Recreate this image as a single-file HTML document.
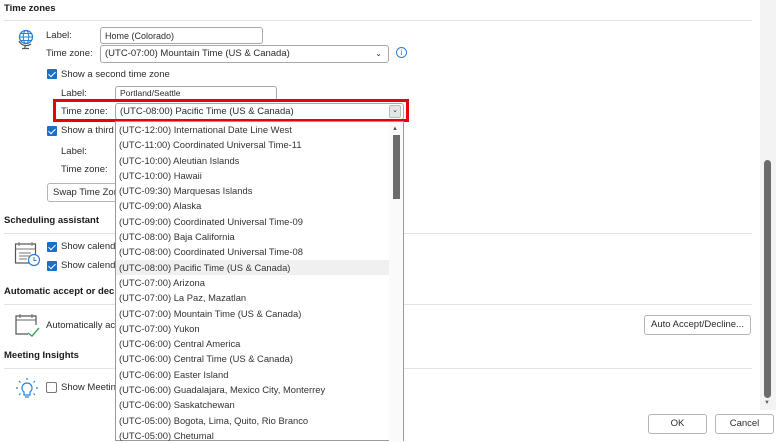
<!DOCTYPE html>
<html><head><meta charset="utf-8"><style>
*{margin:0;padding:0;box-sizing:border-box}
body{width:780px;height:437px;background:#fff;font-family:"Liberation Sans",sans-serif;font-size:9.5px;color:#2b2b2b;position:relative;overflow:hidden}
.a{position:absolute;white-space:nowrap}
.h{font-weight:bold;font-size:9.5px;color:#1a1a1a}
.line{position:absolute;height:1px;background:#e3e3e3;left:4px;width:748px}
.in{position:absolute;border:1px solid #a8a8a8;border-radius:3px;background:#fff;padding-left:4px;line-height:16px;font-size:9px}
.cb{position:absolute;width:10px;height:10px;background:#1a6fc8;border-radius:1px}
.cb:after{content:"";position:absolute;left:3px;top:1px;width:3px;height:6px;border:solid #fff;border-width:0 1.5px 1.5px 0;transform:rotate(45deg)}
.cbe{position:absolute;width:11px;height:11px;border:1px solid #777;border-radius:2px;background:#fff}
.btn{position:absolute;border:1px solid #b5b5b5;border-radius:3px;background:#fff;text-align:center;font-size:9.5px}
.dd{position:absolute;left:115px;top:121px;width:289px;height:320px;background:#fff;border:1px solid #9a9a9a}
.it{height:15.3px;line-height:15.3px;padding-left:3px;font-size:9.4px;color:#333}
.sel{background:#f0f0f0}
</style></head><body>
<div style="position:absolute;left:760px;top:0;width:16px;height:410px;background:#f3f3f3"></div>
<div style="position:absolute;left:764px;top:160px;width:7px;height:238px;background:#6b6b6b;border-radius:4px"></div>
<div class="a" style="left:764px;top:400px;font-size:6px;color:#666">▼</div>

<div class="a h" style="left:4px;top:3px">Time zones</div>
<div class="line" style="top:20px"></div>
<svg class="a" style="left:17px;top:28px" width="18" height="22" viewBox="0 0 18 22"><circle cx="9" cy="9" r="6.5" fill="none" stroke="#2a7fd4" stroke-width="1.3"/><ellipse cx="9" cy="9" rx="2.8" ry="6.5" fill="none" stroke="#2a7fd4" stroke-width="1"/><path d="M2.5 9h13M4 5.5h10M4 12.5h10" stroke="#2a7fd4" stroke-width="1"/><path d="M2 13a8 8 0 0 0 12 3M8 17v3M5 20.5h7" stroke="#555" stroke-width="1.2" fill="none"/></svg>
<div class="a" style="left:46px;top:30px">Label:</div>
<div class="in" style="left:100px;top:27px;width:163px;height:17px">Home (Colorado)</div>
<div class="a" style="left:46px;top:48px">Time zone:</div>
<div class="in" style="left:100px;top:45px;width:289px;height:18px;font-size:9.5px">(UTC-07:00) Mountain Time (US &amp; Canada)<span style="position:absolute;right:6px;top:0;font-size:8px">⌄</span></div>
<div class="a" style="left:396px;top:47px;width:11px;height:11px;border:1.3px solid #2a7fd4;border-radius:50%;color:#2a7fd4;font-size:8px;text-align:center;line-height:9px">i</div>
<div class="cb" style="left:47px;top:69px"></div>
<div class="a" style="left:61px;top:69px">Show a second time zone</div>
<div class="a" style="left:61px;top:88px">Label:</div>
<div class="in" style="left:115px;top:86px;width:162px;height:15px;line-height:13px;font-size:8.5px">Portland/Seattle</div>
<div class="a" style="left:61px;top:106px">Time zone:</div>
<div class="in" style="left:115px;top:103px;width:289px;height:17px;line-height:15px;font-size:9.5px">(UTC-08:00) Pacific Time (US &amp; Canada)<span style="position:absolute;right:2px;top:1px;width:12px;height:13px;background:#e5e5e5;border:1px solid #bbb;border-radius:2px;font-size:7px;line-height:10px;text-align:center">⌄</span></div>
<div class="a" style="left:53px;top:99px;width:356px;height:23px;border:3px solid #e8000b"></div>
<div class="cb" style="left:47px;top:126px"></div>
<div class="a" style="left:61px;top:125px">Show a third time zone</div>
<div class="a" style="left:61px;top:146px">Label:</div>
<div class="a" style="left:61px;top:164px">Time zone:</div>
<div class="btn" style="left:47px;top:183px;width:100px;height:19px;line-height:17px;text-align:left;padding-left:5px">Swap Time Zones</div>

<div class="a h" style="left:4px;top:215px">Scheduling assistant</div>
<div class="line" style="top:233px"></div>
<svg class="a" style="left:14px;top:241px" width="28" height="26" viewBox="0 0 28 26"><rect x="1.5" y="3" width="20" height="19" fill="none" stroke="#555" stroke-width="1.2"/><path d="M1.5 8h20M5 1v4M18 1v4M5 12h12M5 15h12M5 18h8" stroke="#777" stroke-width="1"/><circle cx="20" cy="19" r="5.5" fill="#fff" stroke="#2a7fd4" stroke-width="1.2"/><path d="M20 16v3.5h2.5" stroke="#2a7fd4" stroke-width="1" fill="none"/></svg>
<div class="cb" style="left:47px;top:242px"></div>
<div class="a" style="left:61px;top:241px">Show calendar</div>
<div class="cb" style="left:47px;top:261px"></div>
<div class="a" style="left:61px;top:260px">Show calendar</div>

<div class="a h" style="left:4px;top:286px">Automatic accept or decline</div>
<div class="line" style="top:304px"></div>
<svg class="a" style="left:14px;top:313px" width="28" height="24" viewBox="0 0 28 24"><path d="M22 12V3H2v18h12" fill="none" stroke="#555" stroke-width="1.2"/><path d="M2 7h20M6 1v4M18 1v4" stroke="#666" stroke-width="1"/><path d="M14 20l4 3 7-8" fill="none" stroke="#3aa655" stroke-width="1.4"/></svg>
<div class="a" style="left:46px;top:320px">Automatically accept</div>
<div class="btn" style="left:644px;top:315px;width:107px;height:20px;line-height:18px">Auto Accept/Decline...</div>

<div class="a h" style="left:4px;top:350px">Meeting Insights</div>
<div class="line" style="top:368px"></div>
<svg class="a" style="left:15px;top:377px" width="24" height="24" viewBox="0 0 24 24"><path d="M12 6a5 5 0 0 0-3 9v3h6v-3a5 5 0 0 0-3-9z" fill="none" stroke="#2a7fd4" stroke-width="1.2"/><path d="M10 20h4M12 1v2M4 4l1.5 1.5M20 4l-1.5 1.5M1 11h2M21 11h2M4 18l1.5-1.5M20 18l-1.5-1.5" stroke="#2a7fd4" stroke-width="1.2"/></svg>
<div class="cbe" style="left:46px;top:382px"></div>
<div class="a" style="left:61px;top:382px">Show Meeting Insights</div>

<div class="btn" style="left:648px;top:414px;width:59px;height:20px;line-height:18px">OK</div>
<div class="btn" style="left:715px;top:414px;width:59px;height:20px;line-height:18px">Cancel</div>

<div class="dd">
<div class="it">(UTC-12:00) International Date Line West</div>
<div class="it">(UTC-11:00) Coordinated Universal Time-11</div>
<div class="it">(UTC-10:00) Aleutian Islands</div>
<div class="it">(UTC-10:00) Hawaii</div>
<div class="it">(UTC-09:30) Marquesas Islands</div>
<div class="it">(UTC-09:00) Alaska</div>
<div class="it">(UTC-09:00) Coordinated Universal Time-09</div>
<div class="it">(UTC-08:00) Baja California</div>
<div class="it">(UTC-08:00) Coordinated Universal Time-08</div>
<div class="it sel">(UTC-08:00) Pacific Time (US &amp; Canada)</div>
<div class="it">(UTC-07:00) Arizona</div>
<div class="it">(UTC-07:00) La Paz, Mazatlan</div>
<div class="it">(UTC-07:00) Mountain Time (US &amp; Canada)</div>
<div class="it">(UTC-07:00) Yukon</div>
<div class="it">(UTC-06:00) Central America</div>
<div class="it">(UTC-06:00) Central Time (US &amp; Canada)</div>
<div class="it">(UTC-06:00) Easter Island</div>
<div class="it">(UTC-06:00) Guadalajara, Mexico City, Monterrey</div>
<div class="it">(UTC-06:00) Saskatchewan</div>
<div class="it">(UTC-05:00) Bogota, Lima, Quito, Rio Branco</div>
<div class="it">(UTC-05:00) Chetumal</div>
<div style="position:absolute;left:273px;top:0;width:14px;height:320px;background:#fafafa"></div>
<div style="position:absolute;left:276px;top:4px;font-size:6px;color:#555">▲</div>
<div style="position:absolute;left:277px;top:13px;width:7px;height:64px;background:#6b6b6b"></div>
</div>
</body></html>
